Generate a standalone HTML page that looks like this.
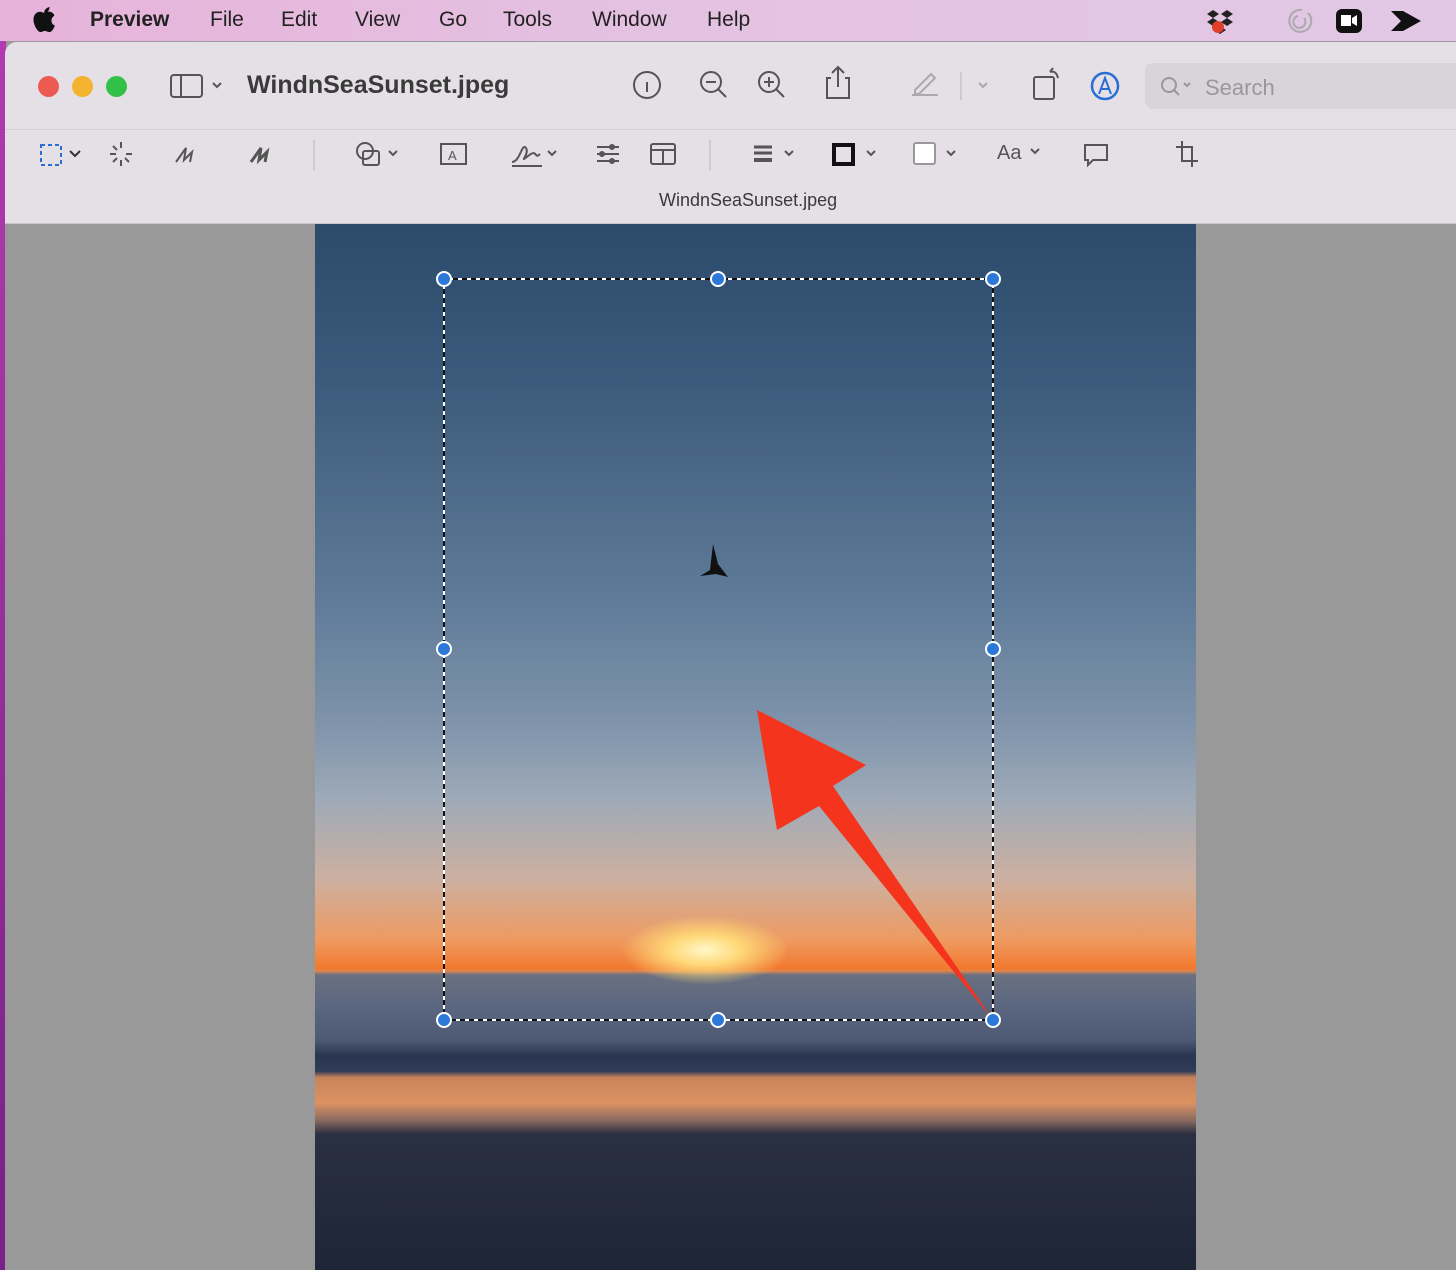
<!DOCTYPE html>
<html><head><meta charset="utf-8"><style>
*{margin:0;padding:0;box-sizing:border-box}
body{width:1456px;height:1270px;overflow:hidden;position:relative;background:#9a9a9a;font-family:"Liberation Sans",sans-serif}
.menu{position:absolute;left:0;top:0;width:1456px;height:41px;background:linear-gradient(90deg,#e6b3da,#e4c3e2 50%,#e2c8e4);color:#222;font-size:21px}
.menu span{position:absolute;top:8px}
.edge{position:absolute;left:0;top:41px;width:6px;height:1229px;background:linear-gradient(#b23ab0,#7a1f8c)}
.win{position:absolute;left:5px;top:42px;width:1451px;height:182px;background:#e4e0e5;border-radius:12px 0 0 0;border-bottom:1px solid #c8c4c8}
.dot{position:absolute;top:76px;width:21px;height:21px;border-radius:50%}
.t{position:absolute;color:#3a3a3a}
.canvas{position:absolute;left:5px;top:224px;width:1451px;height:1046px;background:#999}
.img{position:absolute;left:315px;top:224px;width:881px;height:1046px;background:linear-gradient(#2c4a6a 0%,#3c5a7b 15%,#5f7b99 36%,#8094ab 48%,#9eaab8 55%,#cdb0a0 62.7%,#ee9a60 68.5%,#f2782e 71.2%,#e0864e 71.4%,#6a7080 71.8%,#5a6680 75%,#4e5a74 78%,#2a3550 79.5%,#303c58 81%,#c8845a 81.6%,#dc9262 84%,#8a6a60 85.7%,#2a3042 87%,#1e2536 100%)}
.sun{position:absolute;left:620px;top:915px;width:170px;height:70px;border-radius:50%;background:radial-gradient(#fff8c8,#ffd878 30%,rgba(255,180,80,0) 70%)}
</style></head><body>
<div class="menu">
<svg style="position:absolute;left:33px;top:7px" width="24" height="26" viewBox="0 0 24 26"><path fill="#111" d="M16.5 0c.2 1.6-.5 3.1-1.4 4.2-1 1.1-2.4 2-3.9 1.9-.2-1.5.6-3.1 1.4-4 1-1.1 2.6-1.9 3.9-2.1zM21.3 8.8c-.2.1-2.8 1.6-2.8 4.8 0 3.7 3.3 5 3.4 5-.1.1-.5 1.8-1.7 3.5-1.1 1.5-2.2 3-4 3s-2.3-1.1-4.3-1.1-2.6 1.1-4.3 1.1-2.9-1.6-4.1-3.2C2 19.700.5 16 .5 12.4c0-5 3.2-7.700 6.400-7.700 1.700 0 3.100 1.100 4.200 1.100 1 0 2.600-1.200 4.600-1.200.8 0 3.500.1 5.200 2.700z"/></svg>
<span style="left:90px;font-weight:bold">Preview</span>
<span style="left:210px">File</span><span style="left:281px">Edit</span><span style="left:355px">View</span><span style="left:439px">Go</span><span style="left:503px">Tools</span><span style="left:592px">Window</span><span style="left:707px">Help</span>
<svg style="position:absolute;left:1205px;top:6px" width="230" height="30">
<g fill="#222"><path d="M8 4l6 4-6 4-6-4zM22 4l6 4-6 4-6-4zM8 12l6 4-6 4-6-4zM22 12l6 4-6 4-6-4zM15 20l6 4-6 4-6-4z"/></g>
<circle cx="13" cy="21" r="6" fill="#e0402a"/>
<path d="M97 4a11 11 0 1 0 6 3M93 10a6 6 0 1 0 6 2" stroke="#aaa" stroke-width="2" fill="none"/>
<rect x="131" y="3" width="26" height="24" rx="6" fill="#111"/><rect x="136" y="9" width="10" height="11" fill="#fff"/><path d="M147 12l5-3v11l-5-3z" fill="#fff"/>
<path d="M186 5h12l18 10-18 10h-12l10-10z" fill="#111"/>
</svg>
</div>
<div class="edge"></div>
<div class="win">
<div style="position:absolute;left:0;top:87px;width:1451px;height:1px;background:#d2ced3"></div>
</div>
<div class="dot" style="left:38px;background:#ed5a52"></div>
<div class="dot" style="left:72px;background:#f4b32e"></div>
<div class="dot" style="left:106px;background:#33c048"></div>
<div class="t" style="left:247px;top:71px;font-size:25px;font-weight:bold">WindnSeaSunset.jpeg</div>
<div class="t" style="left:659px;top:190px;font-size:18px">WindnSeaSunset.jpeg</div>
<div style="position:absolute;left:1145px;top:63px;width:311px;height:46px;background:#d8d4d9;border-radius:8px 0 0 8px"></div>
<svg style="position:absolute;left:1160px;top:76px" width="36" height="22" fill="none" stroke="#9a979b" stroke-width="2"><circle cx="9" cy="9" r="7"/><path d="M14 14l5 5M24 7l3 3 3-3"/></svg>
<div class="t" style="left:1205px;top:75px;font-size:22px;color:#9a979b">Search</div>
<div class="t" style="left:997px;top:142px;font-size:20px;color:#555">Aa</div>
<svg style="position:absolute;left:0;top:42px" width="1456" height="140" fill="none" stroke="#555" stroke-width="2">
<path d="M1031 107l4 4 4-4"/>
<rect x="171" y="33" width="31" height="22" rx="3"/><line x1="181" y1="33" x2="181" y2="55"/><path d="M213 41l4 4 4-4"/>
<circle cx="647" cy="43" r="13"/><line x1="647" y1="40" x2="647" y2="50"/>
<circle cx="711" cy="40" r="10"/><line x1="706" y1="40" x2="716" y2="40"/><line x1="718" y1="47" x2="726" y2="55"/>
<circle cx="769" cy="40" r="10"/><line x1="764" y1="40" x2="774" y2="40"/><line x1="769" y1="35" x2="769" y2="45"/><line x1="776" y1="47" x2="784" y2="55"/>
<path d="M831 36h-4v20h22v-20h-4M838 25v20M832 31l6-6 6 6"/>
<path d="M912 53h26M915 48l16-16 4 4-16 16h-4z" stroke="#aaa"/><line x1="961" y1="30" x2="961" y2="58" stroke="#ccc"/><path d="M979 41l4 4 4-4" stroke="#aaa"/>
<rect x="1034" y="35" width="20" height="22" rx="2"/><path d="M1050 30q6-2 8 6M1050 30l3-4"/>
<circle cx="1105" cy="44" r="13" stroke="#2a6fd6" stroke-width="2.5"/><path d="M1099 52l6-16 6 16M1101 47h8" stroke="#2a6fd6"/>
<rect x="41" y="103" width="20" height="20" stroke="#2a6fd6" stroke-dasharray="4 3"/><path d="M70 109l5 5 5-5" stroke="#333"/>
<path d="M121 100v6M121 118v6M110 112h6M126 112h6M113 104l4 4M129 120l-4-4M113 120l4-4" />
<path d="M176 120l10-14-2 12 8-8-2 10"/><path d="M251 120l10-14-2 12 8-8-2 10" stroke-width="3"/>
<line x1="314" y1="98" x2="314" y2="128" stroke="#ccc"/>
<circle cx="365" cy="109" r="8"/><rect x="363" y="109" width="16" height="14" rx="2"/><path d="M389 109l4 4 4-4"/>
<rect x="441" y="102" width="25" height="20"/><text x="448" y="118" font-size="13" fill="#555" stroke="none">A</text>
<path d="M512 120c8 0 10-20 14-14s-8 16 2 8 6 4 12-2M512 124h30"/><path d="M548 109l4 4 4-4"/>
<path d="M597 105h22M597 112h22M597 119h22"/><circle cx="612" cy="105" r="2"/><circle cx="602" cy="112" r="2"/><circle cx="612" cy="119" r="2"/>
<rect x="651" y="102" width="24" height="20" rx="2"/><path d="M651 108h24M663 108v14"/>
<line x1="710" y1="98" x2="710" y2="128" stroke="#ccc"/>
<path d="M754 105h18M754 111h18" stroke-width="3"/><path d="M754 118h18" stroke-width="4"/><path d="M785 109l4 4 4-4"/>
<rect x="834" y="103" width="19" height="19" stroke="#111" stroke-width="4"/><path d="M867 109l4 4 4-4"/>
<rect x="914" y="101" width="21" height="21" rx="2" fill="#fff" stroke="#999"/><path d="M947 109l4 4 4-4"/>
<path d="M1085 103h22v15h-14l-5 5v-5h-3z"/>
<path d="M1182 99v20h16M1176 105h16v20"/>
</svg>
<div class="canvas"></div>
<div class="img"></div>
<div class="sun"></div>
<svg style="position:absolute;left:0;top:0" width="1456" height="1270">
<path d="M700 576l10-6 3-26 5 20 10 13-12-3z" fill="#111"/>
<rect x="444" y="279" width="549" height="741" fill="none" stroke="#fff" stroke-width="2"/>
<rect x="444" y="279" width="549" height="741" fill="none" stroke="#111" stroke-width="2" stroke-dasharray="5 4"/>
<path d="M757 710L866 765 833 786 993 1020 819 806 777 830z" fill="#f5341d"/>
<g fill="#2b78d8" stroke="#fff" stroke-width="2">
<circle cx="444" cy="279" r="7"/><circle cx="718" cy="279" r="7"/><circle cx="993" cy="279" r="7"/>
<circle cx="444" cy="649" r="7"/><circle cx="993" cy="649" r="7"/>
<circle cx="444" cy="1020" r="7"/><circle cx="718" cy="1020" r="7"/><circle cx="993" cy="1020" r="7"/>
</g>
</svg>
</body></html>
